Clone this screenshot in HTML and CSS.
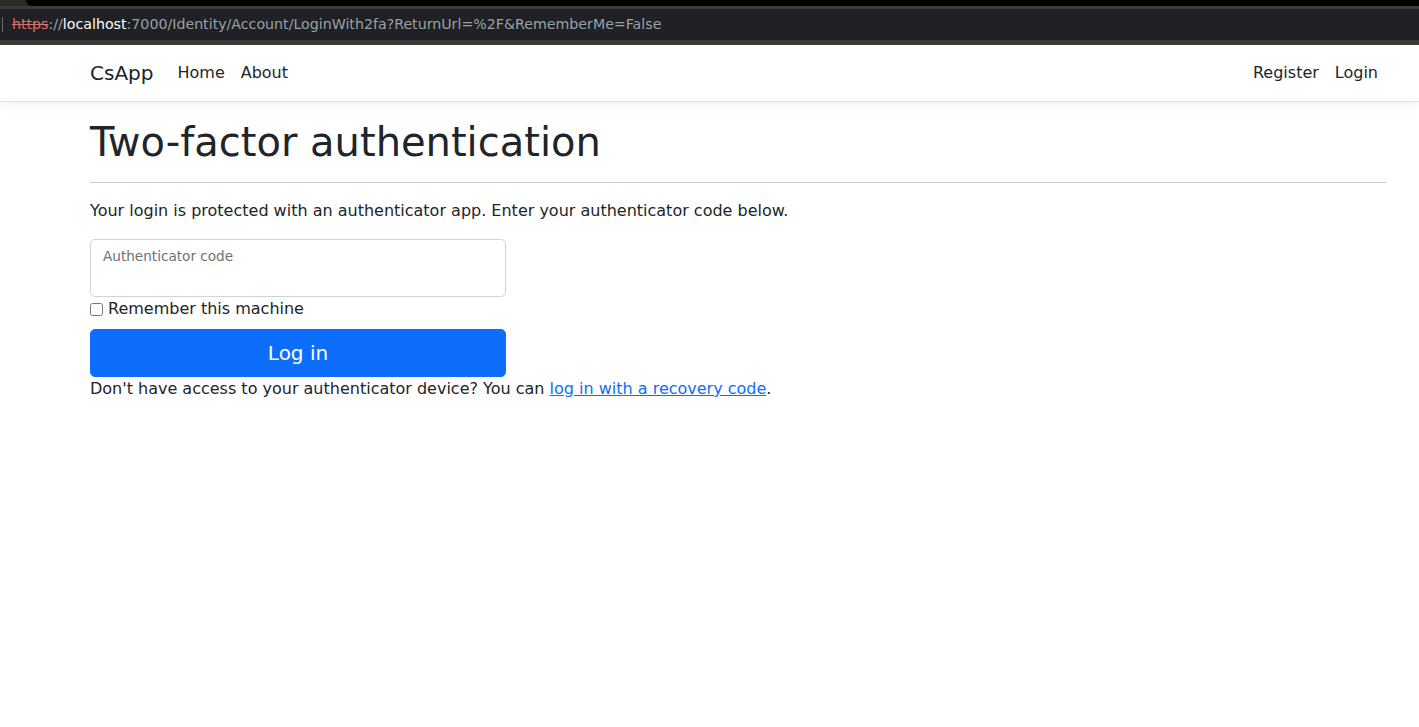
FILE: index.html
```html
<!DOCTYPE html>
<html lang="en">
<head>
<meta charset="utf-8">
<title>Two-factor authentication - CsApp</title>
<link rel="stylesheet" href="styles.css">
</head>
<body>
<div class="chrome">
  <div class="chrome-top"><div class="chrome-tabstub"></div><div class="chrome-tab"></div></div>
  <div class="chrome-bar">
    <span class="caret"></span>
    <span class="url"><span class="scheme">https</span><span class="dim">://</span><span class="host">localhost</span><span class="dim">:7000/Identity/Account/LoginWith2fa?ReturnUrl=%2F&amp;RememberMe=False</span></span>
  </div>
</div>
<header class="navbar">
  <div class="container nav-inner">
    <a class="brand" href="#">CsApp</a>
    <nav class="nav-left">
      <a class="nav-link" href="#">Home</a>
      <a class="nav-link" href="#">About</a>
    </nav>
    <nav class="nav-right">
      <a class="nav-link" href="#">Register</a>
      <a class="nav-link" href="#">Login</a>
    </nav>
  </div>
</header>
<main class="container main">
  <h1 class="title">Two-factor authentication</h1>
  <hr class="rule">
  <p class="lead-text">Your login is protected with an authenticator app. Enter your authenticator code below.</p>
  <form class="form">
    <div class="floating">
      <label class="floating-label">Authenticator code</label>
    </div>
    <label class="remember"><input type="checkbox" class="check"> Remember this machine</label>
    <button type="button" class="btn">Log in</button>
  </form>
  <p class="help">Don't have access to your authenticator device? You can <a class="link" href="#">log in with a recovery code</a>.</p>
</main>
</body>
</html>
```
FILE: styles.css
```css
* { box-sizing: border-box; }
html, body { margin: 0; padding: 0; }
body {
  font-family: "DejaVu Sans", sans-serif;
  font-size: 16px;
  line-height: 1.5;
  color: #212529;
  background: #fff;
}
.chrome { background: #3b3b3b; height: 45px; display: flex; flex-direction: column; }
.chrome-top { height: 6px; display: flex; background: #2a2a2a; }
.chrome-tabstub { width: 26px; }
.chrome-tab { flex: 1; background: #000; border-bottom-left-radius: 8px; }
.chrome-bar {
  margin-top: 3px;
  height: 31px;
  background: #202124;
  display: flex;
  align-items: center;
  padding-left: 2px;
}
.caret { width: 1px; height: 15px; background: #6b6b6b; margin-right: 9px; }
.url { font-size: 14.2px; color: #9aa0a6; white-space: nowrap; line-height: 1; }
.scheme { color: #d8706c; text-decoration: line-through; }
.dim { color: #9aa0a6; }
.host { color: #ffffff; }

.container { width: 1320px; margin-left: 78px; padding: 0 12px; }

.navbar {
  background: #fff;
  border-bottom: 1px solid #dee2e6;
  box-shadow: 0 4px 12px rgba(0,0,0,0.05);
  padding: 8px 0;
  margin-bottom: 16px;
}
.nav-inner { display: flex; align-items: center; }
.brand {
  font-size: 20px;
  line-height: 30px;
  padding: 5px 0;
  margin-right: 16px;
  color: #212529;
  text-decoration: none;
}
.nav-left { display: flex; flex: 1; }
.nav-right { display: flex; }
.nav-link {
  padding: 8px;
  color: #212529;
  text-decoration: none;
  line-height: 24px;
}

.main { padding-bottom: 16px; }
.title {
  font-size: 40px;
  font-weight: 400;
  line-height: 1.2;
  margin: 0 0 8px;
}
.rule {
  margin: 16px 0;
  border: 0;
  border-top: 1px solid #c8c9ca;
}
.lead-text { margin: 0 0 16px; }
.form { width: 416px; display: flex; flex-direction: column; align-items: flex-start; }
.floating {
  width: 416px;
  height: 58px;
  border: 1px solid #ced4da;
  border-radius: 5px;
  padding: 8px 12px;
}
.floating-label {
  font-size: 13.6px;
  line-height: 17px;
  color: #6c7075;
  display: block;
}
.remember { display: flex; align-items: center; line-height: 24px; }
.check { margin: 0 5px 0 0; width: 13px; height: 13px; }
.btn {
  margin-top: 8px;
  width: 416px;
  height: 48px;
  background: #0d6efd;
  color: #fff;
  border: 1px solid #0d6efd;
  border-radius: 5px;
  font-family: "DejaVu Sans", sans-serif;
  font-size: 20px;
  line-height: 30px;
  padding: 8px 16px;
}
.help { margin: 0; }
.link { color: #0d6efd; text-decoration: underline; }
```
